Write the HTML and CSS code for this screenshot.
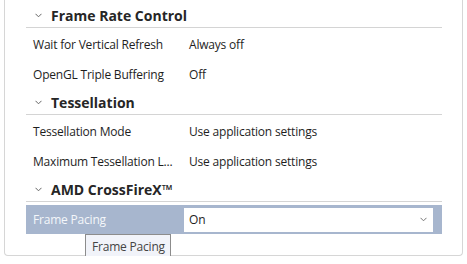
FILE: index.html
```html
<!DOCTYPE html>
<html lang="en">
<head>
  <meta charset="UTF-8">
  <title>Graphics Settings</title>
  <link rel="stylesheet" href="styles.css">
</head>
<body>

<div class="panel">

  <!-- Frame rate -->
  <div class="group-head">
    <svg class="chev" width="7" height="5" viewBox="0 0 7 5"><path d="M0.5 0.8 L3.5 3.8 L6.5 0.8" fill="none" stroke="#666" stroke-width="1"/></svg>
    <span>Frame Rate Control</span>
  </div>
  <div class="row">
    <div class="label">Wait for Vertical Refresh</div>
    <div class="value">Always off</div>
  </div>
  <div class="row">
    <div class="label">OpenGL Triple Buffering</div>
    <div class="value">Off</div>
  </div>

  <!-- Tessellation -->
  <div class="group-head">
    <svg class="chev" width="7" height="5" viewBox="0 0 7 5"><path d="M0.5 0.8 L3.5 3.8 L6.5 0.8" fill="none" stroke="#666" stroke-width="1"/></svg>
    <span>Tessellation</span>
  </div>
  <div class="row">
    <div class="label">Tessellation Mode</div>
    <div class="value">Use application settings</div>
  </div>
  <div class="row">
    <div class="label">Maximum Tessellation L...</div>
    <div class="value">Use application settings</div>
  </div>

  <!-- CrossFire -->
  <div class="group-head">
    <svg class="chev" width="7" height="5" viewBox="0 0 7 5"><path d="M0.5 0.8 L3.5 3.8 L6.5 0.8" fill="none" stroke="#666" stroke-width="1"/></svg>
    <span>AMD CrossFireX&trade;</span>
  </div>
  <div class="row selected">
    <div class="label">Frame Pacing</div>
    <div class="combo">
      <span>On</span>
      <svg width="7" height="5" viewBox="0 0 7 5"><path d="M0.5 0.8 L3.5 3.8 L6.5 0.8" fill="none" stroke="#777" stroke-width="1"/></svg>
    </div>
  </div>

  <div class="tooltip">Frame Pacing</div>
</div>

</body>
</html>
```

FILE: styles.css
```css
body {
  margin: 0;
  font-family: "Open Sans", "Noto Sans", sans-serif;
  background: #fff;
  color: #1e1e1e;
}
.panel {
  position: relative;
  margin-left: 4px;
  width: 459px;
  padding: 1px 20px 21px 21px;
  box-sizing: border-box;
  border: 1px solid #d6d6d6;
  border-top: none;
  border-radius: 0 0 4px 4px;
}
.group-head {
  display: flex;
  align-items: center;
  height: 27px;
  padding-top: 3px;
  box-sizing: border-box;
  border-bottom: 1px solid #d4d4d4;
  font-size: 14px;
  font-weight: 700;
  color: #262626;
}
.group-head .chev {
  margin-left: 9px;
  margin-right: 9px;
}
.row {
  display: flex;
  align-items: center;
  height: 30px;
  padding-top: 3px;
  box-sizing: border-box;
  font-size: 12px;
  letter-spacing: -0.2px;
}
.row .label {
  width: 151px;
  padding-left: 7px;
}
.row .value {
  padding-left: 5px;
}
.selected {
  margin-top: 3px;
  height: 29px;
  padding-top: 0;
  background: #a7b6ce;
  color: #f4f6fa;
}
.combo {
  display: flex;
  align-items: center;
  justify-content: space-between;
  width: 249px;
  height: 24px;
  padding: 0 6px 0 5px;
  box-sizing: border-box;
  background: #fff;
  color: #1e1e1e;
}
.tooltip {
  position: absolute;
  left: 80px;
  top: 234px;
  width: 86px;
  height: 25px;
  box-sizing: border-box;
  padding-left: 6px;
  line-height: 23px;
  border: 1px solid #8c8c8c;
  background: #f1f3f9;
  color: #444;
  font-size: 12px;
  letter-spacing: -0.2px;
}
```
